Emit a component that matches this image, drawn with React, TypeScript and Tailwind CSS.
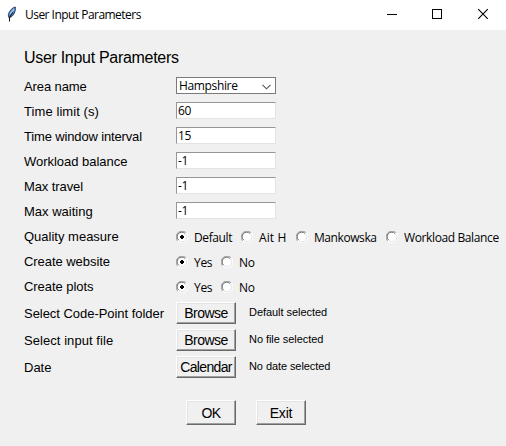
import React from "react";

const ui = "font-['Open_Sans','Noto_Sans',sans-serif] text-[12px] leading-[16px] whitespace-nowrap";
const arial = "font-['Liberation_Sans',Arial,sans-serif] whitespace-nowrap";

function Feather() {
  return (
    <svg width="16" height="16" viewBox="0 0 16 16" className="mt-[-2px] shrink-0">
      <path d="M4.800 11.500C3 8 7 2 11.300 1C12 5 9.500 10.500 5.800 11.500Z" fill="#4a86cf" stroke="#26344c" strokeWidth="0.900" />
      <path d="M6.300 8L10 2.800" stroke="#a9d0f5" strokeWidth="1.300" />
      <path d="M5.500 15.500V11.500L9 6" fill="none" stroke="#101010" strokeWidth="1" />
    </svg>
  );
}

function TitleBar() {
  return (
    <header className="flex h-[30px] items-center bg-white pl-[4px]">
      <Feather />
      <span className={`${ui} ml-[5px] grow tracking-[-0.53px]`}>User Input Parameters</span>
      <svg width="138" height="30" viewBox="0 0 138 30" className="shrink-0" fill="none" stroke="#000">
        <path d="M19 14.500H29" />
        <rect x="64.500" y="9.500" width="9" height="9" />
        <path d="M110.200 9.200L119.800 18.800M119.800 9.200L110.200 18.800" strokeWidth="1.100" />
      </svg>
    </header>
  );
}

function Row({ label, track, tall, children }: { label: string; track: string; tall?: boolean; children: React.ReactNode }) {
  return (
    <div className={`flex items-center ${tall ? "h-[27px]" : "h-[25px]"}`}>
      <span className={`${arial} ${track} w-[152px] shrink-0 text-[13px] leading-[16px] ${tall ? "pt-[3px]" : "pt-[2px]"}`}>{label}</span>
      {children}
    </div>
  );
}

function Field({ value }: { value: string }) {
  return (
    <div className="flex h-[17px] w-[100px] items-center border border-t-[#969696] border-l-[#969696] border-r-[#e3e3e3] border-b-[#e3e3e3] bg-white pl-px">
      <span className={`${ui} tracking-[-0.3px]`}>{value}</span>
    </div>
  );
}

function Radio({ label, on, width, track }: { label: string; on?: boolean; width: string; track: string }) {
  return (
    <div className={`flex shrink-0 items-center ${width}`}>
      <svg width="12" height="12" viewBox="0 0 12 12" className="mt-[2px] shrink-0">
        <circle cx="6" cy="6" r="5" fill="#fff" />
        <path d="M1.800 10.200A5.500 5.500 0 0 1 10.200 1.800" fill="none" stroke="#a0a0a0" />
        <path d="M2.500 9A4.500 4.500 0 0 1 9 2.500" fill="none" stroke="#696969" />
        <path d="M10.200 1.800A5.500 5.500 0 0 1 1.800 10.200" fill="none" stroke="#fff" />
        <path d="M9.400 3A4.500 4.500 0 0 1 3 9.400" fill="none" stroke="#e3e3e3" />
        {on && <path d="M5 4h2v1h1v2h-1v1h-2v-1h-1v-2h1Z" fill="#000" />}
      </svg>
      <span className={`${ui} ${track} ml-[6px] pt-[4px]`}>{label}</span>
    </div>
  );
}

function Button({ label, size, track }: { label: string; size: string; track: string }) {
  return (
    <button className={`flex shrink-0 items-center justify-center border border-t-white border-l-white border-r-[#696969] border-b-[#696969] bg-[#f0f0f0] shadow-[inset_-1px_-1px_0_#a0a0a0,inset_1px_1px_0_#e3e3e3] ${size}`}>
      <span className={`${arial} ${track} text-[14px] leading-[16px]`}>{label}</span>
    </button>
  );
}

function Note({ children, track }: { children: string; track: string }) {
  return <span className={`${arial} ${track} ml-[13px] text-[11px] leading-[14px] -mt-[2px]`}>{children}</span>;
}

export default function App() {
  return (
    <div className="h-[446px] w-[506px] overflow-hidden bg-[#f0f0f0] text-black">
      <TitleBar />
      <main className="pl-[24px]">
        <h1 className={`${arial} h-[43px] pt-[18px] text-[16px] leading-[20px] tracking-[-0.3px]`}>User Input Parameters</h1>
        <Row label="Area name" track="tracking-[-0.1px]">
          <div className="flex h-[17px] w-[100px] items-center justify-between border border-[#7a7a7a] bg-white pl-[2px] pr-[4px]">
            <span className={`${ui} tracking-[-0.35px]`}>Hampshire</span>
            <svg width="9" height="6" viewBox="0 0 9 6" fill="none" stroke="#555" strokeWidth="1.100" className="mt-[3px]">
              <path d="M.5 .8L4.500 4.800L8.500 .8" />
            </svg>
          </div>
        </Row>
        <Row label="Time limit (s)" track="tracking-[0.08px]"><Field value="60" /></Row>
        <Row label="Time window interval" track="tracking-[-0.15px]"><Field value="15" /></Row>
        <Row label="Workload balance" track="tracking-[-0.03px]"><Field value="-1" /></Row>
        <Row label="Max travel" track="tracking-[-0.1px]"><Field value="-1" /></Row>
        <Row label="Max waiting" track="tracking-[0px]"><Field value="-1" /></Row>
        <Row label="Quality measure" track="tracking-[0px]">
          <Radio label="Default" on width="w-[65px]" track="tracking-[-0.4px]" />
          <Radio label="Ait H" width="w-[55px]" track="tracking-[0.1px]" />
          <Radio label="Mankowska" width="w-[90px]" track="tracking-[-0.42px]" />
          <Radio label="Workload Balance" width="w-[116px]" track="tracking-[-0.38px]" />
        </Row>
        <Row label="Create website" track="tracking-[-0.05px]">
          <Radio label="Yes" on width="w-[45px]" track="tracking-[-0.3px]" />
          <Radio label="No" width="w-[45px]" track="tracking-[-0.3px]" />
        </Row>
        <Row label="Create plots" track="tracking-[-0.05px]">
          <Radio label="Yes" on width="w-[45px]" track="tracking-[-0.3px]" />
          <Radio label="No" width="w-[45px]" track="tracking-[-0.3px]" />
        </Row>
        <div className="pt-px">
          <Row tall label="Select Code-Point folder" track="tracking-[-0.04px]">
            <Button label="Browse" size="h-[22px] w-[60px]" track="tracking-[-0.55px]" />
            <Note track="tracking-[-0.05px]">Default selected</Note>
          </Row>
          <Row tall label="Select input file" track="tracking-[0.06px]">
            <Button label="Browse" size="h-[22px] w-[60px]" track="tracking-[-0.55px]" />
            <Note track="tracking-[-0.05px]">No file selected</Note>
          </Row>
          <Row tall label="Date" track="tracking-[0px]">
            <Button label="Calendar" size="h-[22px] w-[60px]" track="tracking-[-0.65px]" />
            <Note track="tracking-[-0.08px]">No date selected</Note>
          </Row>
        </div>
        <div className="flex gap-[20px] pl-[162px] pt-[20px]">
          <Button label="OK" size="h-[25px] w-[50px]" track="tracking-[-0.7px]" />
          <Button label="Exit" size="h-[25px] w-[50px]" track="tracking-[-0.2px]" />
        </div>
      </main>
    </div>
  );
}
